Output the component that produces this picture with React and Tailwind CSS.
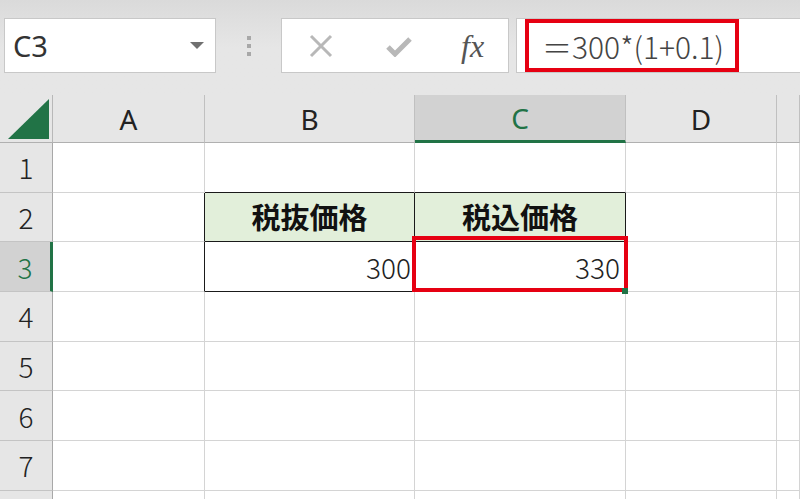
import React from "react";

const COLS = ["A", "B", "C", "D", ""];
const ROWS = [1, 2, 3, 4, 5, 6, 7, 8];

function Cell({ r, c }) {
  const col = COLS[c];
  let right = "border-r-[#d4d4d4]";
  let bottom = "border-b-[#d4d4d4]";
  let bg = "bg-white";
  let content = null;
  let extra = "";
  const inTable = (r === 2 || r === 3) && (col === "B" || col === "C");
  if (inTable) {
    right = "border-r-[#1a1a1a]";
    bottom = "border-b-[#1a1a1a]";
  }
  if (r === 1 && (col === "B" || col === "C")) bottom = "border-b-[#1a1a1a]";
  if ((r === 2 || r === 3) && col === "A") right = "border-r-[#1a1a1a]";
  if (r === 2 && (col === "B" || col === "C")) {
    bg = "bg-[#e2efda]";
    content = (
      <span className="w-full text-center font-bold text-[29px] text-[#111] [font-family:'Noto_Sans_CJK_JP',sans-serif]">
        {col === "B" ? "税抜価格" : "税込価格"}
      </span>
    );
  }
  if (r === 3 && col === "B") {
    content = (
      <span className="w-full text-right pr-[3px] text-[28px] font-light text-[#222] [font-family:'Noto_Sans_CJK_JP',sans-serif]">
        300
      </span>
    );
  }
  if (r === 3 && col === "C") {
    extra = "relative";
    content = (
      <>
        <span className="w-full text-right pr-[5px] text-[28px] font-light text-[#222] [font-family:'Noto_Sans_CJK_JP',sans-serif]">
          330
        </span>
        <div className="absolute -top-[6px] -left-[3px] -right-[3px] -bottom-[1px] border-[4px] border-[#e60012]" />
        <div className="absolute -right-[3px] -bottom-[3px] w-[6px] h-[6px] bg-[#217346]" />
      </>
    );
  }
  return (
    <div
      className={`h-[49.7px] flex items-center border-r border-b ${right} ${bottom} ${bg} ${extra}`}
    >
      {content}
    </div>
  );
}

export default function App() {
  return (
    <div className="w-[800px] h-[499px] overflow-hidden bg-[#e6e6e6] [font-family:'Noto_Sans',sans-serif]">
      {/* toolbar */}
      <div className="h-[95px] flex items-start pt-[18px] bg-gradient-to-b from-[#dadada] via-[#e6e6e6] to-[#e6e6e6]">
        {/* name box */}
        <div className="ml-[4px] w-[212px] h-[55px] bg-white border border-[#c8c8c8] flex items-center pl-[8px] pr-[10px]">
          <span className="text-[29px] text-[#333] leading-none">C3</span>
          <div className="ml-auto mr-[1px] w-0 h-0 border-l-[7px] border-r-[7px] border-t-[7px] border-l-transparent border-r-transparent border-t-[#707070]" />
        </div>
        {/* dots */}
        <div className="w-[65px] h-[55px] flex flex-col items-center justify-center gap-[4px]">
          <div className="w-[4px] h-[4px] bg-[#a8a8a8]" />
          <div className="w-[4px] h-[4px] bg-[#a8a8a8]" />
          <div className="w-[4px] h-[4px] bg-[#a8a8a8]" />
        </div>
        {/* buttons box */}
        <div className="w-[228px] h-[55px] bg-white border border-[#c8c8c8] flex items-center">
          <div className="w-[26px] ml-[27px]">
            <svg width="24" height="24" viewBox="0 0 24 24">
              <path d="M2 2 L22 22 M22 2 L2 22" stroke="#b8b8b8" strokeWidth="3" fill="none" />
            </svg>
          </div>
          <div className="ml-[50px] w-[28px]">
            <svg width="28" height="22" viewBox="0 0 28 22">
              <path d="M3 12 L10 19 L25 4" stroke="#b8b8b8" strokeWidth="5" fill="none" strokeLinejoin="miter" />
            </svg>
          </div>
          <span className="ml-[48px] text-[32px] italic text-[#555] leading-none [font-family:'Liberation_Serif',serif]">
            fx
          </span>
        </div>
        {/* formula box */}
        <div className="ml-[7px] flex-1 h-[55px] bg-white border border-[#c8c8c8] border-r-0 flex items-start pl-[8px]">
          <div className="w-[214px] h-[53px] border-[4px] border-[#e60012] flex items-center pl-[13px]">
            <span className="text-[30px] font-light text-[#444] leading-none whitespace-nowrap [font-family:'Noto_Sans_CJK_JP',sans-serif]">
              ＝300*(1+0.1)
            </span>
          </div>
        </div>
      </div>

      {/* grid */}
      <div className="grid grid-cols-[53px_152px_210px_211px_151px_1fr] bg-white">
        {/* header row */}
        <div className="h-[48px] bg-[#e6e6e6] border-r border-r-[#b8b8b8] border-b border-b-[#b0b0b0] flex items-end justify-end pr-[3px] pb-[3px]">
          <svg width="41" height="40" viewBox="0 0 41 40">
            <polygon points="0,40 41,0 41,40" fill="#217346" />
          </svg>
        </div>
        {COLS.map((c, i) => {
          const sel = c === "C";
          return (
            <div
              key={i}
              className={`h-[48px] flex items-center justify-center text-[28px] leading-none ${
                sel
                  ? "bg-[#d2d2d2] text-[#217346] border-b-[3px] border-b-[#217346] border-r border-r-[#c0c0c0]"
                  : "bg-[#e6e6e6] text-[#222] border-b border-b-[#b0b0b0] border-r border-r-[#c0c0c0]"
              }`}
            >
              {c}
            </div>
          );
        })}
        {ROWS.map((r) => (
          <React.Fragment key={r}>
            <div
              className={`h-[49.7px] flex items-center justify-center text-[28px] font-light [font-family:'Noto_Sans_CJK_JP',sans-serif] border-b border-b-[#c4c4c4] ${
                r === 3
                  ? "bg-[#d2d2d2] text-[#217346] border-r-[3px] border-r-[#217346]"
                  : "bg-[#e6e6e6] text-[#222] border-r border-r-[#a8a8a8]"
              }`}
            >
              {r < 8 ? r : ""}
            </div>
            {COLS.map((c, i) => (
              <Cell key={i} r={r} c={i} />
            ))}
          </React.Fragment>
        ))}
      </div>
    </div>
  );
}
